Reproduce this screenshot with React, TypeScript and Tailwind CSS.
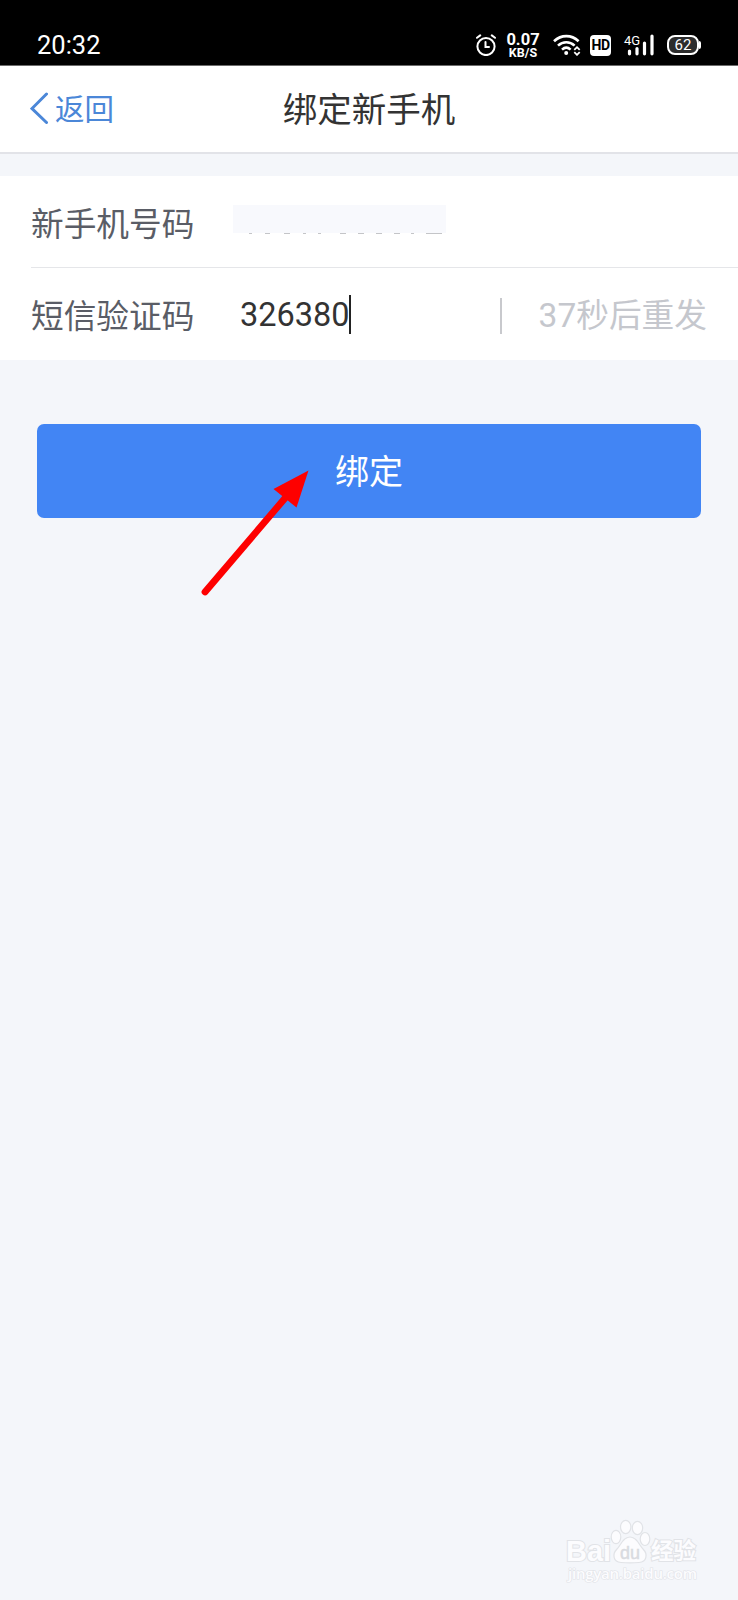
import type { ReactNode } from "react";

function AlarmIcon() {
  return (
    <svg width="20" height="22" viewBox="0 0 20 22" fill="none" stroke="#fff" strokeWidth="2" strokeLinecap="round">
      <circle cx="10" cy="12.5" r="8.6" />
      <path d="M9.5 8v5H13" />
      <path d="M1 3.8 4.2 1.4M19 3.8 15.8 1.4" />
    </svg>
  );
}

function WifiIcon() {
  return (
    <svg width="28" height="22" viewBox="0 0 28 22" fill="none" stroke="#fff" strokeWidth="2.6">
      <path d="M1 7.2C8.3.4 18.4.4 25.6 7.2" />
      <path d="M5 11.6c4.9-4.5 11.7-4.5 16.6 0" />
      <path d="M9 15.6c2.6-2.3 6-2.3 8.6 0" />
      <circle cx="13.2" cy="19" r="2" fill="#fff" stroke="none" />
      <path d="M21.3 15.8 24 13.200 26.700 15.800M21.300 18.200 24 20.800 26.700 18.200" strokeWidth="1.8" />
    </svg>
  );
}

function SignalIcon() {
  return (
    <div className="relative h-[22px] w-[30px]">
      <span className="absolute top-0 left-0 font-['Roboto',sans-serif] text-[13px] leading-[13px]">4G</span>
      <svg className="absolute inset-0" width="30" height="22" viewBox="0 0 30 22" stroke="#fff" strokeWidth="3.2" strokeLinecap="round">
        <path d="M5.5 17v2.8M13 14.5v5.3M20.5 9v10.8M28 2v17.8" />
      </svg>
    </div>
  );
}

function StatusBar() {
  return (
    <div className="flex h-[66px] border-b border-[#6b6b6b] bg-black text-white">
      <span className="mt-[31px] ml-[37px] font-['Roboto',sans-serif] text-[25.5px] leading-[28px]">20:32</span>
      <div className="mt-[34px] ml-auto flex items-start">
        <AlarmIcon />
        <div className="-mt-[1px] ml-[10px] flex w-[34px] flex-col items-center font-['Roboto',sans-serif] font-bold">
          <span className="text-[16.5px] leading-[13px]">0.07</span>
          <span className="text-[12.5px] leading-[13px]">KB/S</span>
        </div>
        <div className="ml-[13px]">
          <WifiIcon />
        </div>
        <span className="mt-[1px] ml-[9px] flex h-[21px] w-[21px] items-center justify-center rounded-[4px] bg-white font-['Roboto',sans-serif] text-[14px] font-bold tracking-[-0.5px] text-black">
          HD
        </span>
        <div className="ml-[13px]">
          <SignalIcon />
        </div>
        <div className="mt-[1px] mr-[37px] ml-[13px] flex items-center">
          <span className="flex h-[20px] w-[32px] items-center justify-center rounded-[8px] border-2 border-white bg-[#2c2c2c] font-['Roboto',sans-serif] text-[15px]">
            62
          </span>
          <span className="h-[8px] w-[2px] rounded-r bg-white" />
        </div>
      </div>
    </div>
  );
}

function Header() {
  return (
    <header className="relative flex h-[88px] items-center justify-center border-b-2 border-[#e2e3e8] bg-white">
      <button type="button" className="absolute top-[23px] left-[30px] flex items-center text-[29.5px] leading-[40px] text-[#4b87d8]">
        <svg width="18" height="32" viewBox="0 0 18 32" fill="none" stroke="currentColor" strokeWidth="3" strokeLinecap="round">
          <path d="M16.5 2 2 16.5l14.5 14" />
        </svg>
        <span className="-mt-[2px] ml-[7px]">返回</span>
      </button>
      <h1 className="-mt-[4px] text-[34.5px] leading-[48px] text-[#333]">绑定新手机</h1>
    </header>
  );
}

// left edge and width of each stroke left visible under the hidden number
const numberTails = [
  [16, 3],
  [32, 5],
  [51, 6],
  [70, 3],
  [85, 3],
  [107, 6],
  [125, 6],
  [143, 6],
  [161, 6],
  [178, 3],
  [193, 16],
];

function MaskedNumber() {
  return (
    <svg width="213" height="29" viewBox="0 0 213 29">
      <rect width="213" height="28" fill="#f8f9fd" />
      {numberTails.map(([x, w]) => (
        <rect key={x} x={x} y="28" width={w} height="1" fill="#c4c5c8" />
      ))}
    </svg>
  );
}

function Row({ label, children }: { label: string; children: ReactNode }) {
  return (
    <div className="flex h-full items-center">
      <span className="w-[202px] text-[32.7px] leading-[48px] text-[#5a5d66]">{label}</span>
      {children}
    </div>
  );
}

function Arrow() {
  return (
    <svg className="absolute top-[465px] left-[198px]" width="116" height="134" viewBox="0 0 116 134">
      <path d="M7 127 88 32" stroke="#fe0000" strokeWidth="6.8" strokeLinecap="round" />
      <path d="M110.5 5.5 75.5 24 98.5 42.5Z" fill="#fe0000" />
    </svg>
  );
}

function Watermark() {
  return (
    <svg className="absolute top-[1515px] left-[560px]" width="145" height="75" viewBox="0 0 145 75" fill="#fcfcfe" stroke="#e1e3e7" strokeWidth="1.2">
      <text x="6" y="46" fontFamily="Liberation Sans" fontWeight="700" fontSize="29" textLength="45" lengthAdjust="spacingAndGlyphs" paintOrder="stroke" strokeWidth="2">
        Bai
      </text>
      <ellipse cx="56" cy="22" rx="4.8" ry="6.7" />
      <ellipse cx="65.7" cy="12" rx="5.2" ry="6.7" />
      <ellipse cx="77.5" cy="13" rx="5.2" ry="6.7" />
      <ellipse cx="85" cy="24" rx="4.8" ry="6.5" />
      <path d="M70 22c7 0 9 8 13 12 5 5 4 13-4 13.5-4 .3-14 .3-18 0-8-.5-9-8.5-4-13.5 4-4 6-12 13-12Z" />
      <text x="60" y="44" fontFamily="Liberation Sans" fontWeight="400" fontSize="19" fill="#d9dbe0" stroke="#d9dbe0" strokeWidth="0.5" textLength="20" lengthAdjust="spacingAndGlyphs">
        du
      </text>
      <text x="91" y="44" fontFamily="Noto Sans CJK SC" fontWeight="700" fontSize="22.5" paintOrder="stroke" strokeWidth="2">
        经验
      </text>
      <text x="8" y="64" fontFamily="Open Sans" fontWeight="600" fontSize="15" textLength="129" paintOrder="stroke" strokeWidth="1.2">
        jingyan.baidu.com
      </text>
    </svg>
  );
}

export default function App() {
  return (
    <div className="relative min-h-[1600px] w-[738px] overflow-hidden bg-[#f4f6fa] font-['Noto_Sans_CJK_SC',sans-serif] font-normal">
      <StatusBar />
      <Header />
      <main className="pt-[22px]">
        <section className="bg-white pl-[31px]">
          <div className="h-[92px] border-b border-[#e5e6e9]">
            <Row label="新手机号码">
              <div className="-mt-[5px]">
                <MaskedNumber />
              </div>
            </Row>
          </div>
          <div className="h-[92px]">
            <Row label="短信验证码">
              <span className="mt-[2px] ml-[7px] font-['Roboto',sans-serif] text-[32.5px] leading-[40px] text-[#333]">326380</span>
              <span className="-ml-px h-[39px] w-[2px] bg-[#222]" />
              <span className="mt-[3px] ml-auto h-[36px] w-[2px] bg-[#c8c9cd]" />
              <span className="mr-[31px] ml-[37px] text-[32.7px] leading-[48px] text-[#c5c7cd]">
                <span className="font-['Roboto',sans-serif] text-[33.5px]">37</span>秒后重发
              </span>
            </Row>
          </div>
        </section>
        <div className="px-[37px] pt-[64px]">
          <button type="button" className="flex h-[94px] w-full items-center justify-center rounded-[7px] bg-[#4285f4] pb-[4px] text-[34px] text-white">
            绑定
          </button>
        </div>
      </main>
      <Arrow />
      <Watermark />
    </div>
  );
}
